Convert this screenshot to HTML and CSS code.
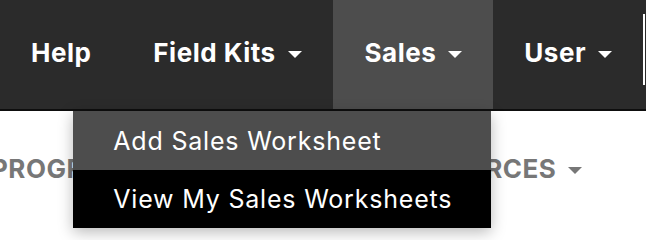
FILE: index.html
```html
<!DOCTYPE html>
<html lang="en">
<head>
<meta charset="utf-8">
<title>Sales menu</title>
<link rel="stylesheet" href="styles.css">
</head>
<body>
<header class="topbar">
  <nav class="mainnav">
    <a class="navitem" href="#">Help</a>
    <a class="navitem" href="#">Field Kits <span class="caret"></span></a>
    <div class="navitem active">Sales <span class="caret"></span>
      <ul class="dropdown">
        <li class="dd-item dd-hover">Add Sales Worksheet</li>
        <li class="dd-item dd-current">View My Sales Worksheets</li>
      </ul>
    </div>
    <a class="navitem" href="#">User <span class="caret"></span></a>
    <span class="divider"></span>
  </nav>
</header>
<section class="subnav">
  <a class="subitem" href="#">PROGRAMS <span class="caret grey"></span></a>
  <a class="subitem" href="#">TRAINING <span class="caret grey"></span></a>
  <a class="subitem" href="#">RESOURCES <span class="caret grey"></span></a>
</section>
</body>
</html>
```

FILE: styles.css
```css
* { box-sizing: border-box; }
html, body { margin: 0; padding: 0; }
body {
  background: #ffffff;
  font-family: "Inter", "Open Sans", "Liberation Sans", sans-serif;
  overflow: hidden;
  width: 646px;
  height: 240px;
}
.topbar {
  background: #2b2b2b;
  border-bottom: 2px solid #0e0e0e;
  height: 111px;
}
.mainnav {
  display: flex;
  align-items: stretch;
  height: 109px;
}
.navitem {
  position: relative;
  display: flex;
  align-items: center;
  padding: 0 31px 4px 31px;
  color: #ffffff;
  font-weight: 700;
  font-size: 26px;
  letter-spacing: 0.5px;
  text-decoration: none;
  white-space: nowrap;
}
.navitem.active { background: #4d4d4d; padding: 0 31px 4px 32px; }
.caret {
  display: inline-block;
  width: 0;
  height: 0;
  margin-left: 12px;
  border-left: 7px solid transparent;
  border-right: 7px solid transparent;
  border-top: 7px solid #ffffff;
  position: relative;
  top: 2px;
}
.caret.grey { border-top-color: #777777; }
.divider {
  align-self: flex-start;
  margin-top: 14px;
  width: 2px;
  height: 71px;
  background: #ffffff;
}
.dropdown {
  position: absolute;
  top: 111px;
  right: 2px;
  width: 418px;
  margin: 0;
  padding: 0;
  list-style: none;
  box-shadow: 0 4px 14px rgba(0, 0, 0, 0.28);
  z-index: 5;
}
.dd-item {
  display: flex;
  align-items: center;
  padding: 0 0 0 40px;
  color: #ffffff;
  font-weight: 400;
  font-size: 25px;
  letter-spacing: 0.8px;
}
.dd-hover { background: #4d4d4d; height: 59px; }
.dd-current { background: #000000; height: 58px; }
.subnav {
  display: flex;
  align-items: center;
  margin-left: -9px;
  padding-top: 42px;
  gap: 32px;
}
.subitem {
  display: flex;
  align-items: center;
  color: #777777;
  font-weight: 700;
  font-size: 26px;
  letter-spacing: 0.5px;
  text-decoration: none;
  white-space: nowrap;
}
```
